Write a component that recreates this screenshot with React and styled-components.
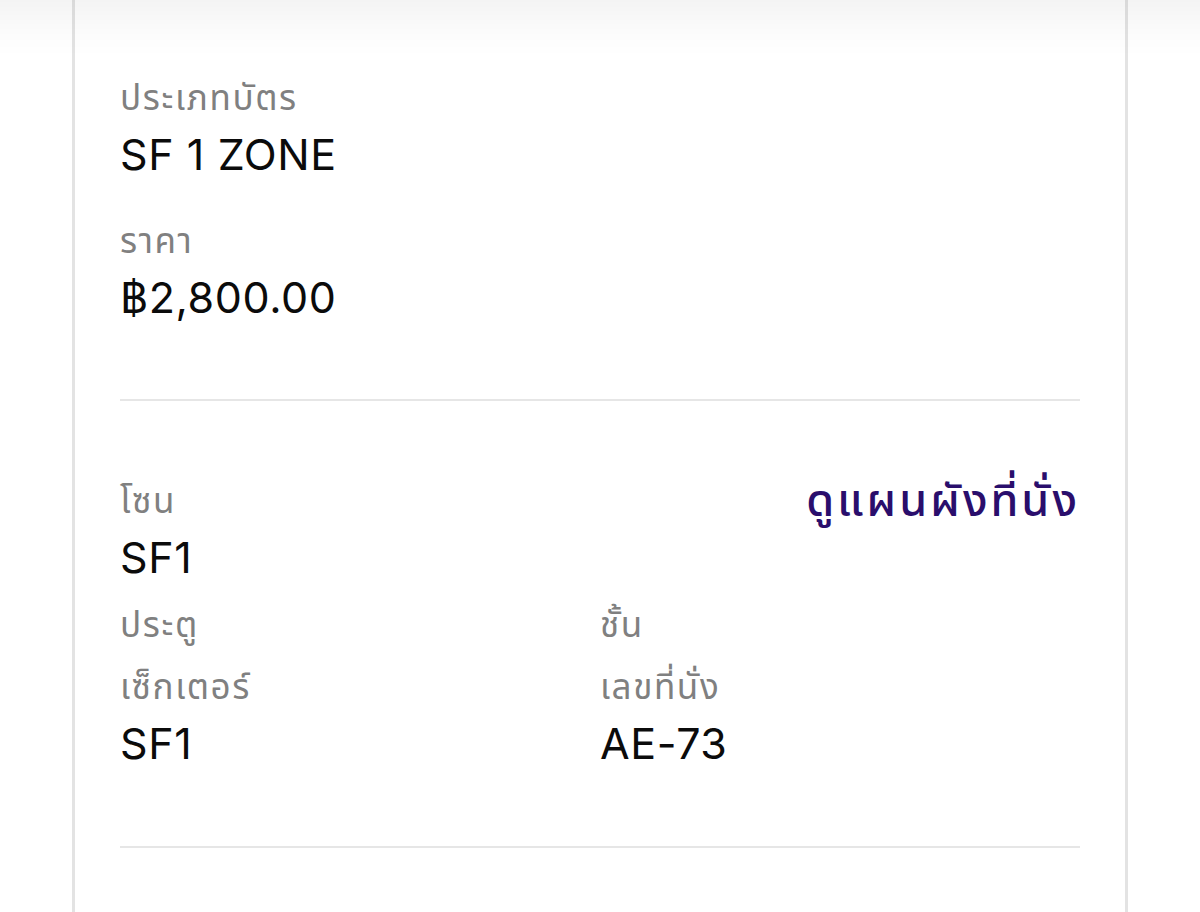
import React from "react";
import styled, { createGlobalStyle } from "styled-components";

const GlobalStyle = createGlobalStyle`
  html, body {
    margin: 0;
    padding: 0;
    background: #ffffff;
  }

  body {
    font-family: Inter, "Noto Sans Thai", "Noto Sans", sans-serif;
    -webkit-font-smoothing: antialiased;
  }
`;

const TopShade = styled.div`
  position: fixed;
  top: 0;
  left: 0;
  right: 0;
  height: 56px;
  background: linear-gradient(
    to bottom,
    rgba(0, 0, 0, 0.045),
    rgba(0, 0, 0, 0.015) 55%,
    rgba(0, 0, 0, 0)
  );
  pointer-events: none;
`;

const Card = styled.div`
  margin: 0 72px;
  min-height: 912px;
  box-sizing: border-box;
  border-left: 3px solid #e3e3e3;
  border-right: 3px solid #e3e3e3;
  padding: 0 45px;
  background: #fff;
`;

const Section = styled.section`
  display: flex;
  flex-direction: column;
  row-gap: ${(props) => props.gap || 0}px;
  padding: ${(props) => props.top}px 0 ${(props) => props.bottom}px;
`;

const Divider = styled.hr`
  margin: 0;
  border: none;
  height: 2px;
  background: #e6e6e6;
`;

const Field = styled.div`
  display: flex;
  flex-direction: column;
`;

const Label = styled.div`
  font-size: 35px;
  line-height: 62px;
  height: 62px;
  color: #808080;
  letter-spacing: 1.6px;
`;

const Value = styled.div`
  font-size: 43px;
  line-height: 52px;
  height: 52px;
  color: #0b0b0b;
  letter-spacing: 0.6px;
`;

const HeaderRow = styled.div`
  display: flex;
  justify-content: space-between;
  align-items: flex-start;
`;

const MapLink = styled.a`
  font-size: 45px;
  line-height: 54px;
  margin-top: 4px;
  font-weight: 500;
  color: #2a0e6c;
  letter-spacing: 3px;
  text-decoration: none;
  cursor: pointer;
`;

const Grid = styled.div`
  display: grid;
  grid-template-columns: 1fr 1fr;
`;

const Column = styled.div`
  display: flex;
  flex-direction: column;
`;

const App = () => {
  return (
    <>
      <GlobalStyle />
      <Card>
        <Section top={66} bottom={76} gap={29}>
          <Field>
            <Label>ประเภทบัตร</Label>
            <Value>SF 1 ZONE</Value>
          </Field>
          <Field>
            <Label>ราคา</Label>
            <Value>฿2,800.00</Value>
          </Field>
        </Section>
        <Divider />
        <Section top={68} bottom={77} gap={10}>
          <HeaderRow>
            <Field>
              <Label>โซน</Label>
              <Value>SF1</Value>
            </Field>
            <MapLink>ดูแผนผังที่นั่ง</MapLink>
          </HeaderRow>
          <Grid>
            <Column>
              <Label>ประตู</Label>
              <Label>เซ็กเตอร์</Label>
              <Value>SF1</Value>
            </Column>
            <Column>
              <Label>ชั้น</Label>
              <Label>เลขที่นั่ง</Label>
              <Value>AE-73</Value>
            </Column>
          </Grid>
        </Section>
        <Divider />
      </Card>
      <TopShade />
    </>
  );
};

export default App;
